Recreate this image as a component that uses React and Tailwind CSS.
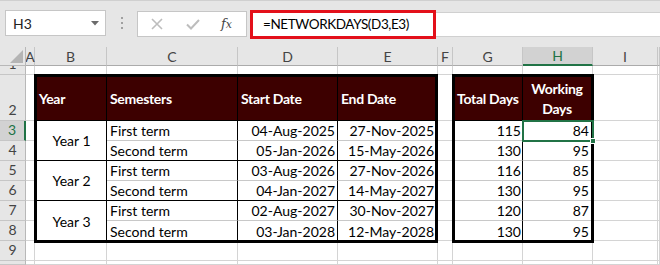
import clsx from 'clsx'

const font = "font-['Lato','Liberation_Sans',sans-serif]"
const sheetGrid =
  'grid h-[218px] grid-cols-[26px_9px_72px_131px_100px_100px_15px_70px_70px_65px_1fr] grid-rows-[19px_9px_46px_20px_20px_20px_20px_20px_20px_20px_1fr]'

const letters = ['', 'A', 'B', 'C', 'D', 'E', 'F', 'G', 'H', 'I', '']
// last row is cut off by the window, so its number stays blank
const rowNums = ['1', '2', '3', '4', '5', '6', '7', '8', '9', '']

const years = [
  {
    label: 'Year 1',
    terms: [
      ['First term', '04-Aug-2025', '27-Nov-2025'],
      ['Second term', '05-Jan-2026', '15-May-2026'],
    ],
  },
  {
    label: 'Year 2',
    terms: [
      ['First term', '03-Aug-2026', '27-Nov-2026'],
      ['Second term', '04-Jan-2027', '14-May-2027'],
    ],
  },
  {
    label: 'Year 3',
    terms: [
      ['First term', '02-Aug-2027', '30-Nov-2027'],
      ['Second term', '03-Jan-2028', '12-May-2028'],
    ],
  },
]

const totals = [
  [115, 84],
  [130, 95],
  [116, 85],
  [130, 95],
  [120, 87],
  [130, 95],
]

function FormulaBar() {
  return (
    <div className="flex h-[47px] items-start bg-[#e6e6e6] border-t border-[#d0d0d0] pt-[9px]">
      {/* name box */}
      <div className="ml-[5px] flex h-[26px] w-[101px] items-center justify-between border border-[#c6c6c6] bg-white pl-[7px] pr-[6px] text-[14px] text-[#222]">
        <span>H3</span>
        <svg width="8" height="5" viewBox="0 0 8 5">
          <path d="M0 0h8L4 4.5z" fill="#6b6b6b" />
        </svg>
      </div>
      <div className="flex h-[26px] w-[31px] flex-col items-center justify-center gap-[3px]">
        <span className="h-[2px] w-[2px] bg-[#a0a0a0]" />
        <span className="h-[2px] w-[2px] bg-[#a0a0a0]" />
        <span className="h-[2px] w-[2px] bg-[#a0a0a0]" />
      </div>
      {/* cancel / enter / insert function */}
      <div className="mt-px flex h-[26px] w-[110px] items-center border border-[#c6c6c6] bg-white">
        <svg className="ml-[13px]" width="12" height="12" viewBox="0 0 12 12">
          <path d="M1 1l10 10M11 1L1 11" stroke="#bdbdbd" strokeWidth="1.6" />
        </svg>
        <svg className="ml-[23px]" width="14" height="11" viewBox="0 0 14 11">
          <path d="M1 5.5l4 4L13 1" stroke="#bdbdbd" strokeWidth="2" fill="none" />
        </svg>
        <span className="ml-[21px] font-['DejaVu_Serif',serif] text-[13px] italic text-[#444]">
          f<span className="text-[11px]">x</span>
        </span>
      </div>
      <div className="ml-[3px] mt-[2px] flex h-[25px] flex-1 items-stretch border-y border-[#d0d0d0] bg-white">
        <div className="my-[-3px] flex w-[186px] items-center border-[3px] border-[#e3101a] pl-[10px] text-[13.5px] tracking-[-0.4px] text-black">
          =NETWORKDAYS(D3,E3)
        </div>
      </div>
    </div>
  )
}

function Corner() {
  return (
    <div className="relative border-r border-b border-[#b8b8b8] bg-[#e6e6e6]">
      <svg className="absolute left-[10px] top-[3px]" width="13" height="13" viewBox="0 0 13 13">
        <path d="M13 0v13H0z" fill="#b4b4b4" />
      </svg>
    </div>
  )
}

// headers and empty gridline cells, laid out in plain row order
function Sheet() {
  const cells = []
  letters.forEach((l, i) => {
    if (i === 0) {
      cells.push(<Corner key="corner" />)
      return
    }
    const active = l === 'H'
    cells.push(
      <div
        key={'h' + i}
        className={clsx(
          'flex items-center justify-center border-r border-[#c6c6c6] text-[14px]',
          active
            ? 'border-b-2 border-b-[#217346] bg-[#d2d2d2] text-[#217346]'
            : 'border-b border-b-[#ababab] bg-[#e6e6e6] text-[#444]'
        )}
      >
        {l}
      </div>
    )
  })
  rowNums.forEach((n, ri) => {
    const active = n === '3'
    cells.push(
      <div
        key={'r' + ri}
        className={clsx(
          'flex items-end justify-center overflow-hidden border-b border-b-[#c6c6c6] text-[14px] leading-[20px]',
          active
            ? 'border-r-2 border-r-[#217346] bg-[#d2d2d2] text-[#217346]'
            : 'border-r border-r-[#b8b8b8] bg-[#e6e6e6] text-[#444]'
        )}
      >
        {n}
      </div>
    )
    for (let c = 1; c < letters.length; c++) {
      cells.push(<div key={ri + '-' + c} className="border-r border-b border-[#d4d4d4] bg-white" />)
    }
  })
  return <div className={clsx('col-start-1 row-start-1', sheetGrid)}>{cells}</div>
}

const headCell = 'flex items-center whitespace-nowrap border-b border-black bg-[#3d0000] text-[14px] font-bold tracking-[-0.3px] text-white'

function TermTable() {
  const head = ['Year', 'Semesters', 'Start Date', 'End Date']
  return (
    <div className="col-start-3 col-end-7 row-start-3 row-end-10 ml-[-1px] mt-[-1px] mb-[-2px] grid grid-cols-[70px_131px_100px_1fr] grid-rows-[44px_20px_20px_20px_20px_20px_1fr] border-[3px] border-black bg-white">
      {head.map((h, i) => (
        <div key={h} className={clsx(headCell, i < 3 && 'border-r', i > 0 ? 'pl-[3px]' : 'pl-[2px]')}>
          {h}
        </div>
      ))}
      {years.map((y, yi) => {
        const lastGroup = yi === years.length - 1
        return [
          <div
            key={y.label}
            className={clsx(
              'row-span-2 flex items-center justify-center border-r border-black text-[14px]',
              !lastGroup && 'border-b'
            )}
          >
            {y.label}
          </div>,
          ...y.terms.map((t, ti) => {
            const bottom = ti === 0 ? 'border-b border-b-[#c8c8c8]' : lastGroup ? '' : 'border-b border-b-black'
            return [
              <div key={t[0] + yi} className={clsx('flex items-center border-r border-r-black pl-[3px] text-[14px]', bottom)}>
                {t[0]}
              </div>,
              <div key={t[1]} className={clsx('flex items-center justify-end border-r border-r-black pr-[2px] text-[14px]', bottom)}>
                {t[1]}
              </div>,
              <div key={t[2]} className={clsx('flex items-center justify-end pr-px text-[14px]', bottom)}>
                {t[2]}
              </div>,
            ]
          }),
        ]
      })}
    </div>
  )
}

function DaysTable() {
  return (
    <div className="relative z-10 col-start-8 col-end-10 row-start-3 row-end-10 ml-[-1px] mr-[-1px] mt-[-1px] mb-[-2px] grid grid-cols-[68px_1fr] grid-rows-[44px_20px_20px_20px_20px_20px_1fr] border-[3px] border-black bg-white">
      <div className={clsx(headCell, 'border-r pl-[2px]')}>Total Days</div>
      <div className={clsx(headCell, 'justify-center text-center leading-[20px]')}>
        Working
        <br />
        Days
      </div>
      {totals.map(([total, work], i) => {
        const bottom = i < totals.length - 1 && 'border-b border-b-[#c8c8c8]'
        return [
          <div key={'t' + i} className={clsx('flex items-center justify-end border-r border-r-black pr-px text-[14px]', bottom)}>
            {total}
          </div>,
          <div key={'w' + i} className={clsx('relative flex items-center justify-end pr-[2px] text-[14px]', bottom)}>
            {work}
            {i === 0 && (
              <div className="absolute left-[-1px] top-[-1px] right-[-3px] bottom-[-2px] border-2 border-[#217346]">
                <div className="absolute right-[-4px] bottom-[-4px] h-[6px] w-[6px] border border-white bg-[#217346]" />
              </div>
            )}
          </div>,
        ]
      })}
    </div>
  )
}

export default function App() {
  return (
    <div className={clsx('h-[265px] w-[660px] overflow-hidden bg-white text-black', font)}>
      <FormulaBar />
      <div className="grid">
        <Sheet />
        {/* tables sit on a second grid layered over the sheet */}
        <div className={clsx('col-start-1 row-start-1', sheetGrid)}>
          <TermTable />
          <DaysTable />
        </div>
      </div>
    </div>
  )
}
